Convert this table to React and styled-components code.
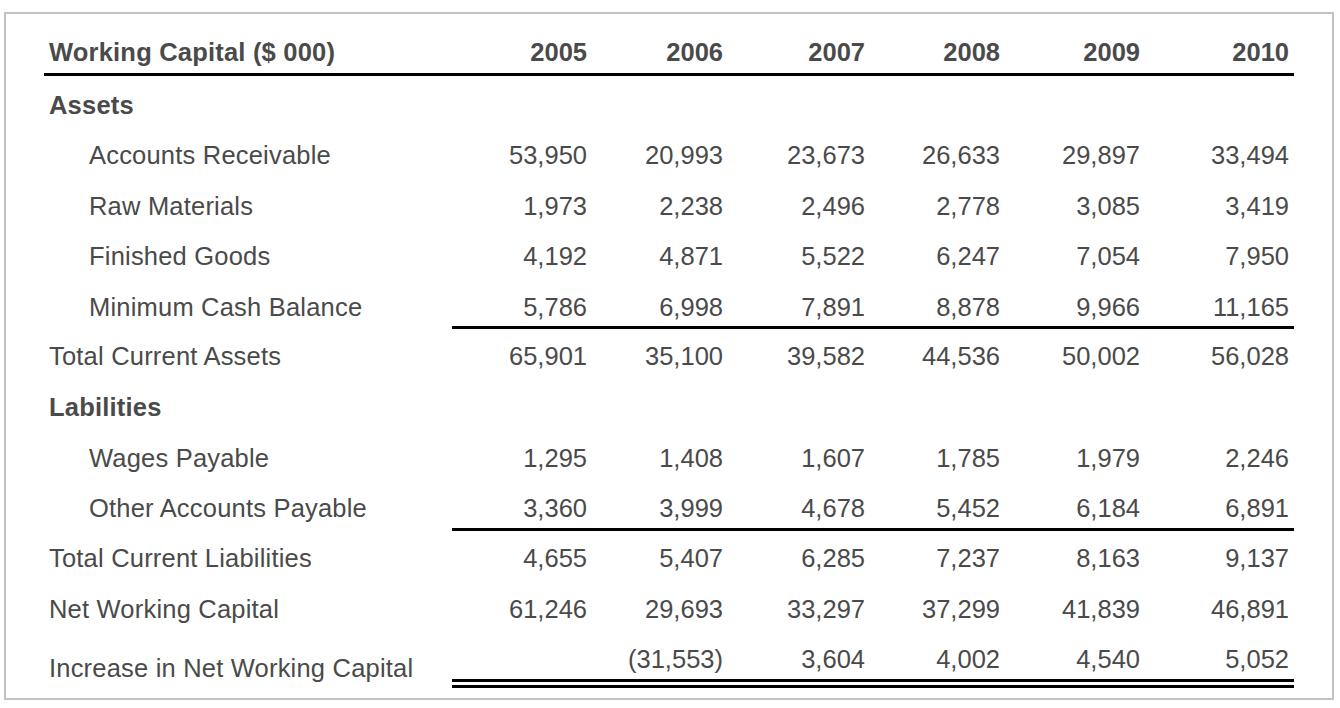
import React from "react";
import styled, { createGlobalStyle } from "styled-components";

const GlobalStyle = createGlobalStyle`
  html, body {
    margin: 0;
    padding: 0;
    background: #ffffff;
  }
  body {
    font-family: "Liberation Sans", Arial, sans-serif;
    color: #4a4a4a;
  }
`;

const Card = styled.div`
  box-sizing: border-box;
  width: 1330px;
  margin: 12px 0 0 4px;
  padding: 0 38px 10px;
  border: 2px solid #c2c2c2;
  background: #fff;
`;

const COLS = "408px 140px 136px 142px 135px 140px 149px";

const Row = styled.div`
  display: grid;
  grid-template-columns: ${COLS};
  height: ${(p) => p.$h}px;
  margin-bottom: ${(p) => p.$mb || 0}px;
  border-bottom: ${(p) => (p.$head ? "3px solid #000" : "none")};
  box-sizing: border-box;
`;

const Cell = styled.div`
  box-sizing: border-box;
  padding-top: ${(p) => p.$pt}px;
  font-size: 25.5px;
  line-height: 30px;
  white-space: nowrap;
  color: #4a4a4a;
`;

const Label = styled(Cell)`
  padding-left: ${(p) => (p.$indent ? 45 : 5)}px;
  font-weight: ${(p) => (p.$bold ? 700 : 400)};
  letter-spacing: 0.2px;
`;

const Num = styled(Cell)`
  text-align: right;
  padding-right: 5px;
  font-weight: ${(p) => (p.$bold ? 700 : 400)};
  border-bottom: ${(p) =>
    p.$rule === "single"
      ? "3px solid #000"
      : p.$rule === "double"
      ? "9px double #000"
      : "none"};
`;

const years = ["2005", "2006", "2007", "2008", "2009", "2010"];

const rows = [
  { label: "Assets", section: true },
  { label: "Accounts Receivable", indent: true, values: ["53,950", "20,993", "23,673", "26,633", "29,897", "33,494"] },
  { label: "Raw Materials", indent: true, values: ["1,973", "2,238", "2,496", "2,778", "3,085", "3,419"] },
  { label: "Finished Goods", indent: true, values: ["4,192", "4,871", "5,522", "6,247", "7,054", "7,950"] },
  { label: "Minimum Cash Balance", indent: true, rule: "single", values: ["5,786", "6,998", "7,891", "8,878", "9,966", "11,165"] },
  { label: "Total Current Assets", after: true, values: ["65,901", "35,100", "39,582", "44,536", "50,002", "56,028"] },
  { label: "Labilities", section: true },
  { label: "Wages Payable", indent: true, values: ["1,295", "1,408", "1,607", "1,785", "1,979", "2,246"] },
  { label: "Other Accounts Payable", indent: true, rule: "single", values: ["3,360", "3,999", "4,678", "5,452", "6,184", "6,891"] },
  { label: "Total Current Liabilities", after: true, values: ["4,655", "5,407", "6,285", "7,237", "8,163", "9,137"] },
  { label: "Net Working Capital", values: ["61,246", "29,693", "33,297", "37,299", "41,839", "46,891"] },
  { label: "Increase in Net Working Capital", rule: "double", values: ["", "(31,553)", "3,604", "4,002", "4,540", "5,052"] },
];

const rowHeight = (r) => {
  if (r.rule === "single") return 47.6;
  if (r.rule === "double") return 53.8;
  if (r.after) return 53.2;
  return 50.4;
};

const WorkingCapitalTable = () => (
  <Card>
    <Row $h={62} $mb={3.8} $head>
      <Label $pt={23} $bold>
        Working Capital ($ 000)
      </Label>
      {years.map((y) => (
        <Num key={y} $pt={23} $bold>
          {y}
        </Num>
      ))}
    </Row>
    {rows.map((r) => {
      const pt = r.after ? 12 : 10.2;
      return (
        <Row key={r.label} $h={rowHeight(r)}>
          <Label
            $pt={r.rule === "double" ? 18.8 : pt}
            $indent={r.indent}
            $bold={r.section}
          >
            {r.label}
          </Label>
          {(r.values || ["", "", "", "", "", ""]).map((v, i) => (
            <Num key={i} $pt={pt} $rule={r.rule}>
              {v}
            </Num>
          ))}
        </Row>
      );
    })}
  </Card>
);

export default function App() {
  return (
    <>
      <GlobalStyle />
      <WorkingCapitalTable />
    </>
  );
}
